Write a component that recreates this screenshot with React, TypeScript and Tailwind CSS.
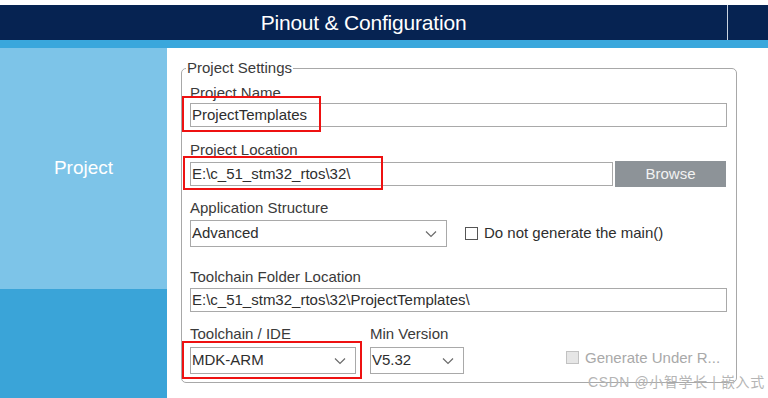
import React from 'react'

function Chevron() {
  return (
    <svg width="12" height="8" viewBox="0 0 12 8" className="shrink-0">
      <polyline points="1,1.5 6,6.5 11,1.5" fill="none" stroke="#6b6b6b" strokeWidth="1.2" />
    </svg>
  )
}

function Field({ label, children, className }: { label: string; children: React.ReactNode; className?: string }) {
  return (
    <div className={className}>
      <div className="text-[15px] leading-[16px] text-[#3a3a3a]">{label}</div>
      {children}
    </div>
  )
}

function Select({ value, className }: { value: string; className: string }) {
  return (
    <div className={`flex items-center justify-between border border-[#a9a9a9] bg-white pl-[1px] pr-[9px] text-[15px] text-[#2e2e2e] ${className}`}>
      <span>{value}</span>
      <Chevron />
    </div>
  )
}

export default function App() {
  return (
    <div
      className="relative w-[768px] h-[398px] overflow-hidden bg-white flex flex-col"
      style={{ fontFamily: '"Liberation Sans", Arial, sans-serif' }}
    >
      <div className="h-[5px] bg-white"></div>
      <div className="h-[35px] flex bg-[#062352]">
        <div className="w-[727px] flex items-center justify-center text-white text-[21px] tracking-[-0.2px]">
          Pinout &amp; Configuration
        </div>
        <div className="w-[1px] bg-[#c9d3e0]"></div>
        <div className="flex-1"></div>
      </div>
      <div className="h-[8px] bg-[#3aa7dc]"></div>

      <div className="flex flex-1">
        <div className="w-[167px] flex flex-col">
          <div className="h-[241px] bg-[#7dc4e8] flex items-center justify-center text-white text-[19px]">
            Project
          </div>
          <div className="flex-1 bg-[#3aa4d8]"></div>
        </div>

        <div className="flex-1">
          <fieldset className="ml-[14px] mt-[12px] w-[556px] h-[323px] border border-[#a8a8a8] rounded-[5px] pl-[8px] pr-[9px]">
            <legend className="ml-[-4px] px-[1px] text-[15px] leading-[16px] text-[#3a3a3a]">Project Settings</legend>

            <Field label="Project Name" className="mt-[9px]">
              <div className="relative mt-[2px]">
                <div className="h-[24px] border border-[#a9a9a9] flex items-center pl-[1px] text-[15px] text-[#2e2e2e]">
                  ProjectTemplates
                </div>
                <div className="absolute left-[-8px] top-[-7px] w-[139px] h-[36px] border-2 border-[#ee1111]"></div>
              </div>
            </Field>

            <Field label="Project Location" className="mt-[15px]">
              <div className="relative mt-[3px] flex items-center">
                <div className="w-[423px] h-[24px] border border-[#a9a9a9] flex items-center pl-[1px] text-[15px] text-[#2e2e2e]">
                  E:\c_51_stm32_rtos\32\
                </div>
                <div className="ml-[2px] w-[111px] h-[26px] bg-[#8d9398] flex items-center justify-center text-[#f2f2f2] text-[15px]">
                  Browse
                </div>
                <div className="absolute left-[-7px] top-[-5px] w-[200px] h-[34px] border-2 border-[#ee1111]"></div>
              </div>
            </Field>

            <Field label="Application Structure" className="mt-[13px]">
              <div className="mt-[4px] flex items-center">
                <Select value="Advanced" className="w-[257px] h-[27px]" />
                <div className="ml-[18px] w-[13px] h-[13px] border border-[#555] bg-white"></div>
                <span className="ml-[6px] text-[15px] text-[#2e2e2e]">Do not generate the main()</span>
              </div>
            </Field>

            <Field label="Toolchain Folder Location" className="mt-[22px]">
              <div className="mt-[3px] h-[24px] border border-[#a9a9a9] flex items-center pl-[1px] text-[15px] text-[#2e2e2e]">
                E:\c_51_stm32_rtos\32\ProjectTemplates\
              </div>
            </Field>

            <div className="mt-[14px] flex items-end">
              <Field label="Toolchain / IDE" className="w-[180px]">
                <div className="relative mt-[5px] w-[166px]">
                  <Select value="MDK-ARM" className="w-[166px] h-[27px]" />
                  <div className="absolute left-[-8px] top-[-6px] w-[180px] h-[38px] border-2 border-[#ee1111]"></div>
                </div>
              </Field>
              <Field label="Min Version">
                <div className="mt-[5px]">
                  <Select value="V5.32" className="w-[94px] h-[27px]" />
                </div>
              </Field>
              <div className="ml-[102px] mb-[5px] flex items-center">
                <div className="w-[13px] h-[13px] border border-[#c2c2c2] bg-[#e6e6e6]"></div>
                <span className="ml-[6px] text-[15px] text-[#a9a9a9]">Generate Under R...</span>
              </div>
            </div>
          </fieldset>
        </div>
      </div>

      <div
        className="absolute left-[588px] top-[374px] text-[14px] leading-[16px] tracking-[0.6px] text-[#b5b5b5]"
        style={{ fontFamily: '"Liberation Sans", "Noto Sans CJK SC", sans-serif' }}
      >
        CSDN @小智学长 | 嵌入式
      </div>
    </div>
  )
}
